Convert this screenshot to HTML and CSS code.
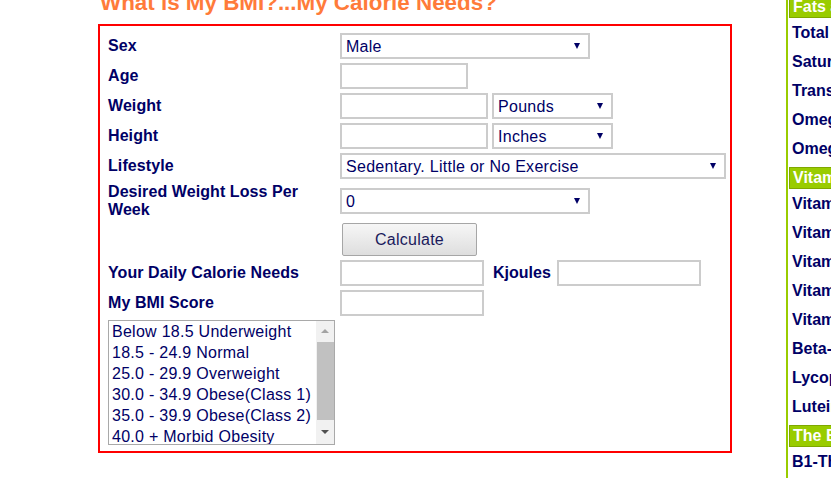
FILE: index.html
```html
<!DOCTYPE html>
<html lang="en">
<head>
<meta charset="utf-8">
<title>What is My BMI?...My Calorie Needs?</title>
<link rel="stylesheet" href="styles.css">
</head>
<body>
<div class="page">
  <main class="main">
    <h1 class="title">What is My BMI?...My Calorie Needs?</h1>
    <form class="calc">
      <div class="lbl">Sex</div>
      <div class="ctl"><span class="sel w250"><select><option>Male</option><option>Female</option></select></span></div>

      <div class="lbl">Age</div>
      <div class="ctl"><input class="txt w128" type="text"></div>

      <div class="lbl">Weight</div>
      <div class="ctl"><input class="txt w148" type="text"><span class="sel w121"><select><option>Pounds</option><option>Kilograms</option></select></span></div>

      <div class="lbl">Height</div>
      <div class="ctl"><input class="txt w148" type="text"><span class="sel w121"><select><option>Inches</option><option>Centimetres</option></select></span></div>

      <div class="lbl">Lifestyle</div>
      <div class="ctl"><span class="sel w386"><select><option>Sedentary. Little or No Exercise</option></select></span></div>

      <div class="lbl">Desired Weight Loss Per Week</div>
      <div class="ctl"><span class="sel w250"><select><option>0</option></select></span></div>

      <div class="lbl"></div>
      <div class="ctl"><button class="btn" type="button">Calculate</button></div>

      <div class="lbl">Your Daily Calorie Needs</div>
      <div class="ctl"><input class="txt w144 kj-in" type="text"><span class="kj">Kjoules</span><input class="txt w144" type="text"></div>

      <div class="lbl">My BMI Score</div>
      <div class="ctl"><input class="txt w144" type="text"></div>

      <div class="listbox">
        <div class="items">
          <div class="item">Below 18.5 Underweight</div>
          <div class="item">18.5 - 24.9 Normal</div>
          <div class="item">25.0 - 29.9 Overweight</div>
          <div class="item">30.0 - 34.9 Obese(Class 1)</div>
          <div class="item">35.0 - 39.9 Obese(Class 2)</div>
          <div class="item">40.0 + Morbid Obesity</div>
        </div>
        <div class="sbar">
          <div class="arr up"></div>
          <div class="thumb"></div>
          <div class="arr down"></div>
        </div>
      </div>
    </form>
  </main>
  <aside class="side">
    <div class="list">
      <div class="head">Fats and Fatty Acids</div>
      <div class="row">Total Fat</div>
      <div class="row">Saturated Fat</div>
      <div class="row">Trans Fat</div>
      <div class="row">Omega-3</div>
      <div class="row">Omega-6</div>
      <div class="head">Vitamins</div>
      <div class="row">Vitamin A</div>
      <div class="row">Vitamin C</div>
      <div class="row">Vitamin D</div>
      <div class="row">Vitamin E</div>
      <div class="row">Vitamin K</div>
      <div class="row">Beta-carotene</div>
      <div class="row">Lycopene</div>
      <div class="row">Lutein</div>
      <div class="head">The B Vitamins</div>
      <div class="row">B1-Thiamin</div>
    </div>
  </aside>
</div>
</body>
</html>
```

FILE: styles.css
```css
html, body {
  margin: 0;
  padding: 0;
  background: #fff;
  overflow: hidden;
}
body {
  font-family: "Liberation Sans", Arial, sans-serif;
  color: #000066;
}
.page {
  display: flex;
  width: 1100px;
  height: 478px;
}
.main {
  width: 786px;
  flex-shrink: 0;
  padding-left: 98px;
  box-sizing: border-box;
}
.title {
  margin: -10px 0 9px 2px;
  font-size: 22.4px;
  line-height: 25px;
  font-weight: bold;
  color: #ff7b3a;
  white-space: nowrap;
}
.calc {
  width: 634px;
  box-sizing: border-box;
  border: 2px solid #ff0000;
  padding: 7px 8px 6px 8px;
  display: grid;
  grid-template-columns: 232px 1fr;
  row-gap: 4px;
  margin: 0;
}
.lbl {
  align-self: center;
  font-size: 16px;
  font-weight: bold;
  line-height: 18px;
  letter-spacing: 0.08px;
  padding-right: 22px;
}
.ctl {
  display: flex;
  align-items: center;
  gap: 4px;
}
.txt {
  height: 26px;
  box-sizing: border-box;
  border: 2px solid #cccccc;
  margin: 0;
  padding: 0 4px;
  font: 16px "Liberation Sans", Arial, sans-serif;
  color: #000066;
  background: #fff;
  outline: none;
}
.w128 { width: 128px; }
.w144 { width: 144px; }
.w148 { width: 148px; }
.w121 { width: 121px; }
.w250 { width: 250px; }
.w386 { width: 386px; }
.sel {
  position: relative;
  display: block;
  height: 26px;
}
.sel select {
  appearance: none;
  -webkit-appearance: none;
  width: 100%;
  height: 26px;
  box-sizing: border-box;
  border: 2px solid #cccccc;
  border-radius: 0;
  margin: 0;
  padding: 0 20px 0 4px;
  background: #fff;
  font: 16px "Liberation Sans", Arial, sans-serif;
  letter-spacing: 0.28px;
  color: #000066;
  outline: none;
}
.sel::after {
  content: "";
  position: absolute;
  right: 10px;
  top: 10px;
  width: 0;
  height: 0;
  border-left: 3.5px solid transparent;
  border-right: 3.5px solid transparent;
  border-top: 6px solid #000066;
  pointer-events: none;
}
.btn {
  margin-left: 2px;
  width: 135px;
  height: 33px;
  box-sizing: border-box;
  border: 1px solid #a6a6a6;
  border-radius: 2px;
  background: linear-gradient(#f6f6f6, #dedede);
  font: 16px "Liberation Sans", Arial, sans-serif;
  letter-spacing: 0.25px;
  color: #1a1a5c;
  padding: 0;
}
.kj-in { margin-right: 5px; }
.kj {
  font-size: 16px;
  font-weight: bold;
  margin-right: 2px;
}
.listbox {
  grid-column: 1;
  width: 227px;
  height: 125px;
  box-sizing: border-box;
  border: 1px solid #a9a9a9;
  display: flex;
  overflow: hidden;
}
.items {
  flex: 1;
  padding-left: 3px;
  overflow: hidden;
}
.item {
  font-size: 16px;
  line-height: 21px;
  letter-spacing: 0.27px;
  white-space: nowrap;
  color: #000066;
}
.sbar {
  width: 18px;
  flex-shrink: 0;
  background: #f1f1f1;
  display: flex;
  flex-direction: column;
  align-items: center;
}
.arr {
  width: 0;
  height: 0;
  border-left: 4px solid transparent;
  border-right: 4px solid transparent;
}
.arr.up {
  border-bottom: 4px solid #a3a3a3;
  margin: 8px 0 9px;
}
.thumb {
  width: 17px;
  height: 78px;
  background: #c1c1c1;
}
.arr.down {
  border-top: 4px solid #505050;
  margin-top: 10px;
}
.side {
  flex-shrink: 0;
  width: 240px;
  border-left: 2px solid #99cc00;
}
.list {
  margin-top: -5px;
}
.head {
  height: 22px;
  box-sizing: border-box;
  margin: 1px 0 3px 1px;
  background: #99cc00;
  border: 1px solid #7fa800;
  color: #fff;
  font-size: 16px;
  font-weight: bold;
  line-height: 20px;
  padding-left: 3px;
  white-space: nowrap;
}
.row {
  height: 29px;
  box-sizing: border-box;
  line-height: 24px;
  padding: 0 0 5px 4px;
  font-size: 16px;
  font-weight: bold;
  white-space: nowrap;
  color: #000066;
}
```
